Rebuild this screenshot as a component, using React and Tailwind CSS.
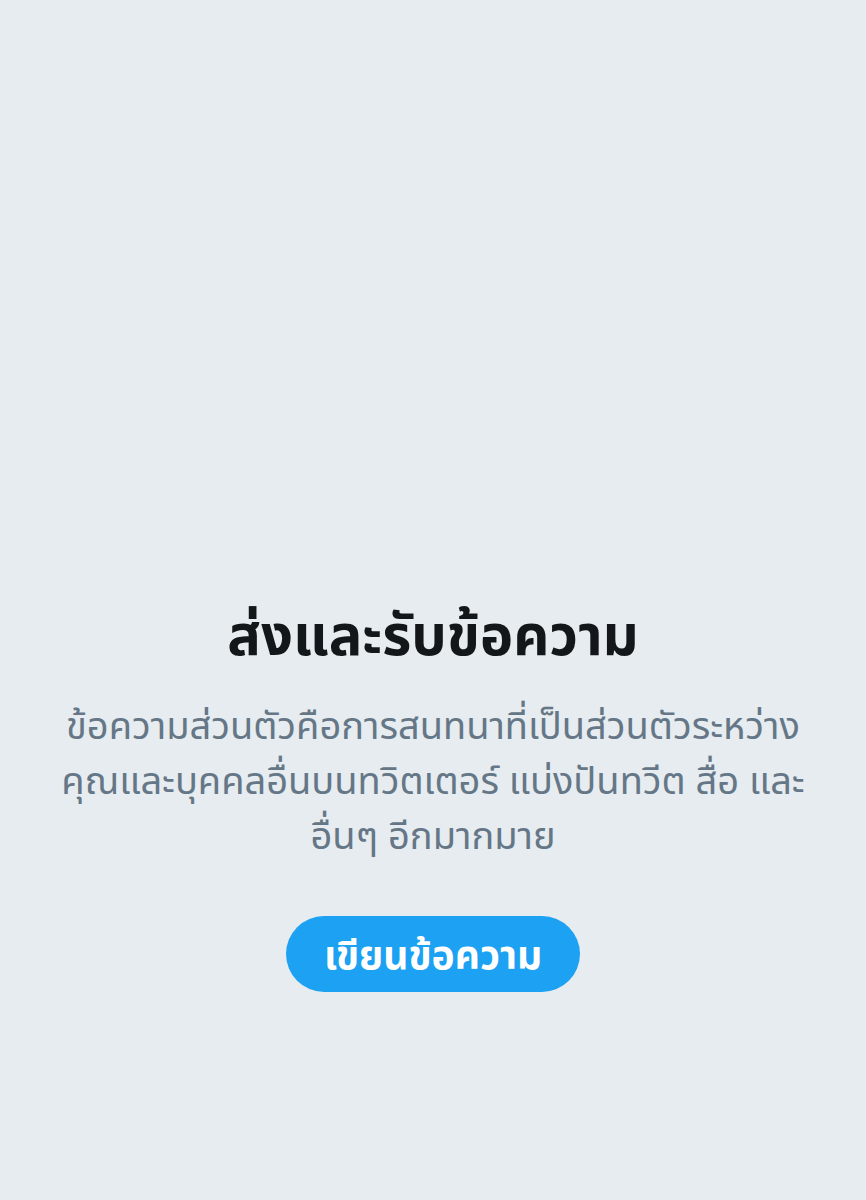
import React from "react";

const App = () => {
  return (
    <div
      className="min-h-[1200px] w-full bg-[#e6ecf0] flex flex-col items-center px-[40px] pt-[601px]"
      style={{ fontFamily: '"Noto Sans", "Noto Sans Thai", "DejaVu Sans", sans-serif' }}
    >
      <h1 className="text-[56px] leading-[64px] font-bold text-[#14171a] text-center">
        ส่งและรับข้อความ
      </h1>
      <p className="mt-[32px] text-[38px] leading-[55px] text-[#657786] text-center">
        ข้อความส่วนตัวคือการสนทนาที่เป็นส่วนตัวระหว่าง
        <br />
        คุณและบุคคลอื่นบนทวิตเตอร์ แบ่งปันทวีต สื่อ และ
        <br />
        อื่นๆ อีกมากมาย
      </p>
      <button className="mt-[54px] h-[76px] px-[38px] rounded-full bg-[#1da1f2] text-white text-[39px] font-bold">
        เขียนข้อความ
      </button>
    </div>
  );
};

export default App;
